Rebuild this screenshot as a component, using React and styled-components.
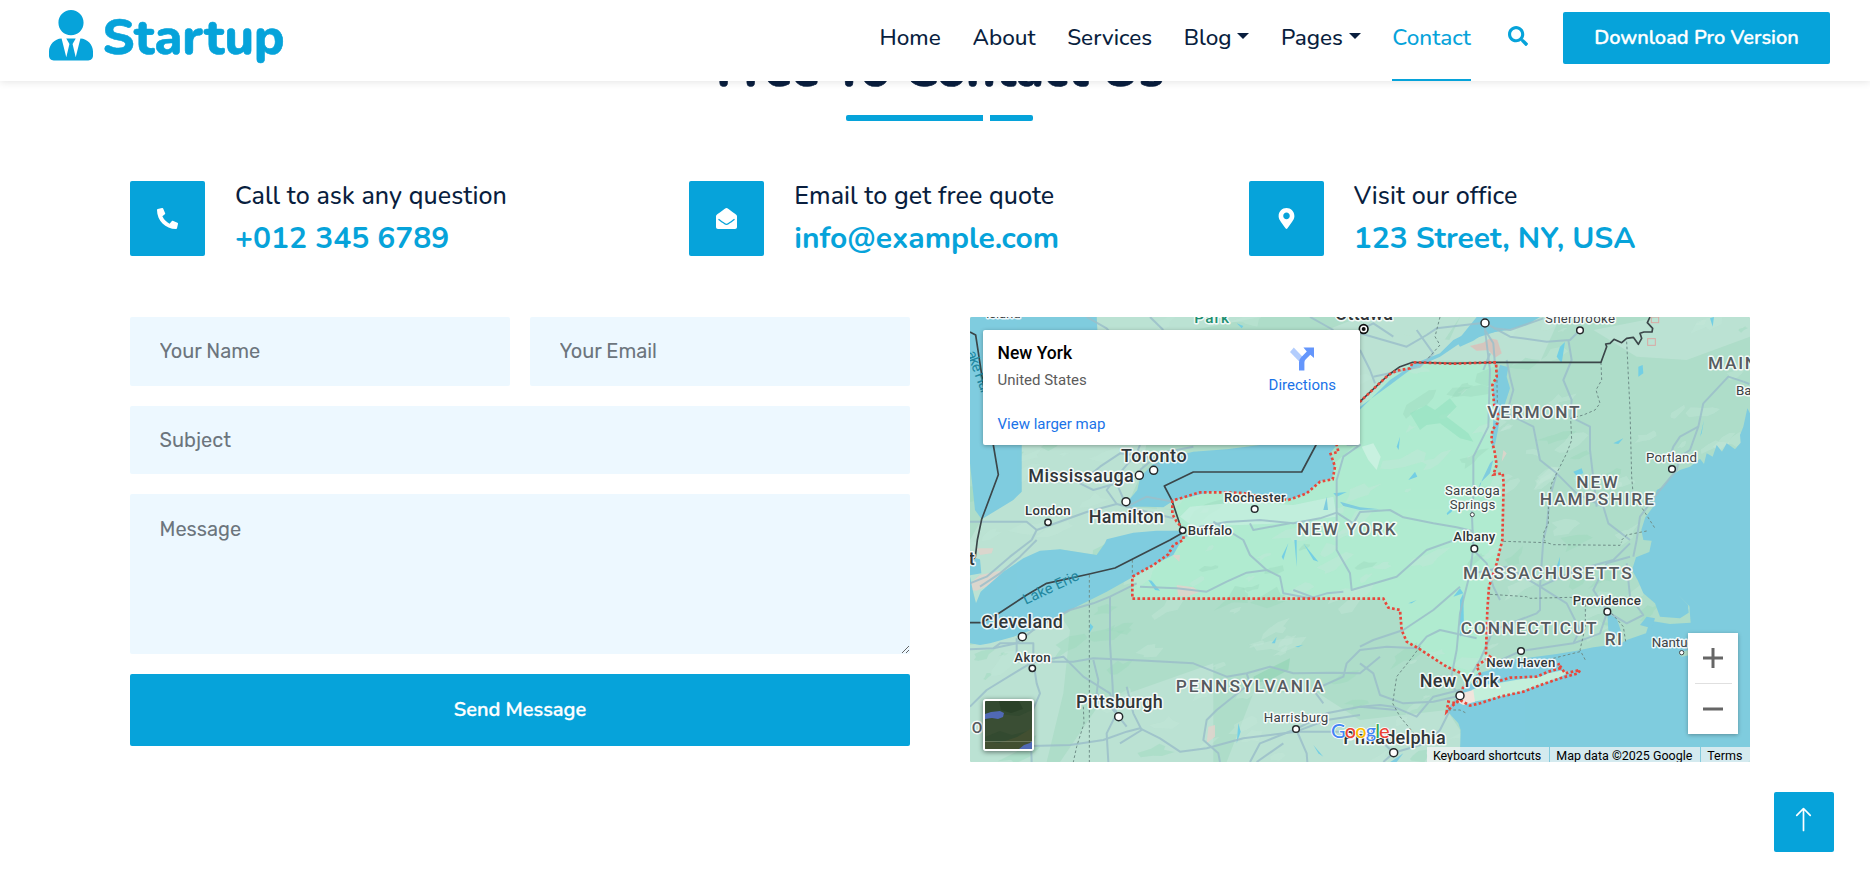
import React from "react";
import styled, { createGlobalStyle, css } from "styled-components";
import { FaUserTie, FaSearch, FaPhoneAlt, FaEnvelopeOpen, FaMapMarkerAlt } from "react-icons/fa";
import { BsArrowUp } from "react-icons/bs";

const primary = "#06A3DA";
const dark = "#091E3E";
const heading = `Nunito, Lato, "Noto Sans", sans-serif`;
const body = `Rubik, Roboto, sans-serif`;
const mapFont = `Roboto, "Liberation Sans", sans-serif`;

const Global = createGlobalStyle`
  * { box-sizing: border-box; }
  body { margin: 0; background: #fff; font-family: ${body}; overflow: hidden; }
  h1, h4, h5, p { margin: 0; }
`;

/* ---------- Page shell ---------- */
const Page = styled.div`
  position: relative;
  width: 100%;
  height: 888px;
  overflow: hidden;
`;

const Header = styled.header`
  position: relative;
  z-index: 2;
  display: flex;
  align-items: flex-start;
  justify-content: space-between;
  height: 81px;
  padding: 0 40px 0 48.5px;
  background: #fff;
  box-shadow: 0 1px 8px rgba(0, 0, 0, 0.11);
`;

const Brand = styled.a`
  display: flex;
  align-items: flex-start;
  padding-top: 10px;
  color: ${primary};
  font: 800 50px/60px ${heading};
  -webkit-text-stroke: 0.6px ${primary};
  svg { width: 44px; height: 50.5px; margin-right: 10px; }
`;

const BrandName = styled.span`
  margin-top: -2px;
`;

const Nav = styled.nav`
  display: flex;
  align-items: flex-start;
`;

const NavLink = styled.a`
  display: flex;
  align-items: flex-start;
  height: 81px;
  margin-right: 31.7px;
  padding-top: 21px;
  font: 500 22.5px/34px ${heading};
  white-space: nowrap;
  color: ${(p) => (p.$active ? primary : dark)};
  ${(p) => p.$active && css`box-shadow: inset 0 -2px 0 ${primary};`}
`;

const Caret = styled.i`
  margin: 12px 0 0 5.7px;
  border: 6.4px solid transparent;
  border-top-color: currentColor;
  border-bottom: 0;
`;

const SearchButton = styled.button`
  display: flex;
  margin: 26px 35.500px 0 5px;
  padding: 0;
  border: 0;
  background: none;
  color: ${primary};
  font-size: 20px;
`;

const Download = styled.a`
  display: flex;
  align-items: center;
  justify-content: center;
  width: 267px;
  height: 52px;
  margin-top: 12px;
  border-radius: 2px;
  background: ${primary};
  color: #fff;
  font: 600 20px/30px ${heading};
  -webkit-text-stroke: 0.3px #fff;
  white-space: nowrap;
`;

const Main = styled.main`
  width: 1620px;
  margin: -41px 0 0 130px;
`;

/* ---------- Section title ---------- */
const SectionTitle = styled.div`
  display: flex;
  flex-direction: column;
  align-items: center;
  h1 {
    color: ${dark};
    font: 800 50px/60px ${heading};
    -webkit-text-stroke: 0.6px ${dark};
    white-space: nowrap;
  }
`;

const Rule = styled.div`
  display: flex;
  gap: 7px;
  margin: 15px 1px 0 0;
`;

const RulePart = styled.span`
  width: ${(p) => p.$w}px;
  height: 6px;
  background: ${primary};
  border-radius: ${(p) => (p.$end ? "0 2px 2px 0" : "2px 0 0 2px")};
`;

/* ---------- Contact details ---------- */
const Details = styled.section`
  display: grid;
  grid-template-columns: repeat(3, 1fr);
  column-gap: 58px;
  margin-top: 60px;
`;

const Detail = styled.div`
  display: flex;
  gap: 30px;
`;

const IconTile = styled.div`
  display: flex;
  align-items: center;
  justify-content: center;
  flex: none;
  width: 75px;
  height: 75px;
  border-radius: 2px;
  background: ${primary};
  color: #fff;
  font-size: 21px;
`;

const DetailLabel = styled.h5`
  color: ${dark};
  font: 500 25px/30px ${heading};
  letter-spacing: 0.09px;
  white-space: nowrap;
`;

const DetailValue = styled.h4`
  margin-top: 10px;
  color: ${primary};
  font: 700 30px/36px ${heading};
  white-space: nowrap;
`;

/* ---------- Form ---------- */
const Columns = styled.section`
  display: grid;
  grid-template-columns: 1fr 1fr;
  gap: 60px;
  margin-top: 60px;
`;

const Form = styled.form`
  display: grid;
  grid-template-columns: 1fr 1fr;
  grid-template-rows: 68.5px 68.5px 160px 72px;
  gap: 20px;
  height: 429px;
`;

const field = css`
  width: 100%;
  height: 100%;
  border: 0;
  border-radius: 2px;
  background: #edf8ff;
  font: 400 20px/30px ${body};
  outline: none;
  &::placeholder { color: #6c757d; opacity: 1; }
`;

const Input = styled.input`
  ${field}
  grid-column: ${(p) => (p.$wide ? "1 / -1" : "auto")};
  padding: 0 29.5px;
`;

const Message = styled.textarea`
  ${field}
  grid-column: 1 / -1;
  padding: 20px 29.5px;
`;

const Submit = styled.button`
  grid-column: 1 / -1;
  border: 0;
  border-radius: 2px;
  background: ${primary};
  color: #fff;
  font: 600 20px/30px ${heading};
  -webkit-text-stroke: 0.3px #fff;
`;

/* ---------- Map ---------- */
const MapFrame = styled.div`
  position: relative;
  height: 445px;
  overflow: hidden;
  border-radius: 2px;
  background: #aeddc9;
  font-family: ${mapFont};
  > svg { display: block; }
`;

const PlaceCard = styled.div`
  position: absolute;
  left: 13px;
  top: 13px;
  display: flex;
  justify-content: space-between;
  width: 377px;
  height: 115px;
  padding: 12px 24px 0 14.5px;
  border-radius: 2px;
  background: #fff;
  box-shadow: 0 1px 4px rgba(0, 0, 0, 0.3);
`;

const PlaceName = styled.p`
  color: #000;
  font-size: 17.5px;
  font-weight: 500;
  line-height: 22px;
`;

const PlaceRegion = styled.p`
  margin-top: 6px;
  color: #5b5b5b;
  font-size: 15px;
  line-height: 20px;
`;

const MapLink = styled.a`
  display: block;
  color: #1a73e8;
  font-size: 15px;
  line-height: 20px;
`;

const LargerMap = styled(MapLink)`
  margin-top: 24px;
`;

const Directions = styled.div`
  display: flex;
  flex-direction: column;
  align-items: center;
  padding-top: 5px;
  svg { margin-bottom: 4px; }
`;

const Zoom = styled.div`
  position: absolute;
  left: 718px;
  top: 316px;
  display: flex;
  flex-direction: column;
  align-items: center;
  width: 50px;
  height: 101px;
  background: #fff;
  box-shadow: 0 1px 4px rgba(0, 0, 0, 0.3);
`;

const ZoomButton = styled.button`
  flex: 1;
  width: 37px;
  padding: 0;
  border: 0;
  background: none;
  & + & { border-top: 1px solid #e0e0e0; }
  svg { display: block; margin: 0 auto; }
`;

const Thumb = styled.div`
  position: absolute;
  left: 13px;
  top: 382px;
  width: 51px;
  height: 52px;
  border: 2px solid #fff;
  border-radius: 3px;
  overflow: hidden;
  box-shadow: 0 1px 5px rgba(0, 0, 0, 0.5);
  svg { display: block; }
`;

const Legal = styled.div`
  position: absolute;
  right: 0;
  bottom: 0;
  display: flex;
  height: 15px;
  background: rgba(245, 245, 245, 0.72);
  color: #000;
  font-size: 12.5px;
  line-height: 17px;
  white-space: nowrap;
`;

const LegalItem = styled.span`
  padding: 0 7.6px 0 6.3px;
  & + & { border-left: 1px solid #84cbdd; }
`;

const BackToTop = styled.a`
  position: absolute;
  left: 1774px;
  top: 792px;
  display: flex;
  justify-content: center;
  width: 60px;
  height: 60px;
  padding: 14px 1px 0 0;
  border-radius: 2px;
  background: ${primary};
  color: #fff;
  svg { width: 27px; height: 27px; }
`;

/* ---------- Map drawing ---------- */
const WATER = "#7fccdf";

const water = [
  "30,21 410,21 412,60 380,100 185,300 185,545 160,570 65,628 45,600 30,460",
  "500,590 510,566 532,540 541,500 580,462 640,440 700,425 800,418 900,405 960,380 1199,300 1290,210 1365,160 1440,130 1480,90 1540,60 1600,44 1640,30 1640,55 1560,80 1500,100 1440,140 1350,180 1290,225 1200,290 1150,380 1130,405 1110,430 1124,468 1115,505 1080,514 1040,550 985,570 900,552 760,544 640,572 610,592 560,590",
  "30,800 40,850 48,880 62,845 130,785 190,745 240,722 300,718 410,735 435,700 440,688 520,668 590,662 650,662 668,668 664,692 640,735 580,765 520,800 440,845 380,875 300,915 250,945 230,955 160,980 90,1000 60,1005 30,1000",
  "30,740 60,748 64,790 30,796",
  "1620,165 1645,172 1640,200 1650,235 1632,290 1612,330 1604,300 1598,250 1604,215",
  "1550,21 1740,21 1700,45 1640,60 1570,72 1540,92 1500,110 1490,95",
  "1600,330 1618,338 1606,400 1595,420",
  "1600,450 1590,490 1560,520 1550,560 1566,510 1590,460",
  "2370,310 2362,295 2350,350 2340,375 2342,398 2325,418 2300,400 2286,425 2270,405 2258,440 2240,430 2232,462 2220,446 2190,470 2160,480 2130,500 2110,530 2090,540 2080,590 2056,622 2044,660 2050,690 2075,692 2068,726 2028,742 2016,780 2034,812 2050,850 2085,880 2100,920 2160,925 2186,908 2184,885 2150,850 2188,888 2192,938 2130,942 2070,932 2058,970 2000,990 1980,1002 1900,1012 1850,1022 1790,1032 1700,1044 1620,1052 1590,1080 1550,1092 1535,1120 1500,1150 1460,1200 1475,1218 1495,1240 1502,1260 1500,1330 1480,1370 2380,1370",
  "1942,910 1970,925 1985,970 1965,980 1945,960",
  "2040,945 2060,920 2085,925 2075,955",
  "1270,1370 1330,1330 1310,1356",
  "1090,600 1100,560 1104,600",
  "1140,575 1200,592 1260,598 1200,600 1150,588",
];

const lakes = [
  "1345,510 1365,485 1372,500", "1480,860 1500,835 1510,850", "1840,485 1865,475 1870,490 1850,498",
  "2035,170 2048,165 2050,190 2035,200", "1800,110 1815,96 1805,160 1790,140", "2250,25 2262,21 2258,50",
  "2220,380 2232,330 2225,370", "965,740 985,700 970,750", "1003,690 1010,690 1010,770", "1030,700 1075,755 1060,750",
  "565,810 575,812 600,842 585,840", "1460,610 1480,590 1475,605 1462,615", "1310,410 1320,380 1316,420",
  "935,1000 950,980 945,1000", "1005,1010 1030,1004 1015,1012", "835,1240 842,1265 830,1300", "1060,1305 1090,1340 1075,1330",
  "390,940 400,950 388,970", "1500,870 1510,850 1512,960 1500,980", "1790,770 1800,740 1798,790", "830,40 850,48 845,55",
  "1120,550 1160,546 1130,560", "1345,880 1370,870 1355,880", "1960,400 1990,385 1975,402",
];

const roads = [
  "30,635 200,635 230,660 380,606 470,582 540,600 640,625",
  "230,660 215,690", "640,575 560,560 500,590 470,520 400,540 360,520 420,470 480,430 560,440 600,470",
  "470,582 440,540 470,500 530,430 540,405", "700,410 600,430 540,480", "660,690 720,650 800,636 900,630 1000,640 1080,625 1130,608",
  "1130,608 1130,510 1150,440 1200,405 1160,405", "1130,608 1180,640 1200,606 1290,600 1330,622 1420,640 1490,652 1540,664",
  "760,635 850,690 870,735 920,780 960,800 970,850 1050,865 1100,850 1150,845", "870,640 880,660 990,640",
  "540,830 650,835 740,845 800,815 860,788 920,780", "1130,608 1130,720 1170,790 1175,840 1310,800 1400,720 1540,670",
  "1000,840 1060,862", "1200,1010 1240,990 1330,960 1420,900 1500,830",
  "30,1018 100,1015 170,1000 220,960 330,900 400,880 450,860 530,820",
  "100,1015 120,1000 220,1000 220,1055 340,1055 400,1045 560,1052 700,1060 800,1100 860,1090 930,1070 1000,1090 1120,1088 1200,1090 1260,1040",
  "450,860 450,1000 458,1130 460,1200 500,1250", "220,1055 230,1120 240,1150 210,1220 215,1356",
  "30,1190 80,1140 170,1085 220,1055 310,1040 370,1100 450,1150 470,1210",
  "170,985 170,1050 220,1040", "400,1050 415,1110 410,1150 470,1210 440,1270 445,1356",
  "215,1308 330,1305 430,1290 500,1265 540,1255 600,1285 660,1325 740,1315 850,1285 1008,1265 1100,1230 1200,1215",
  "500,1130 520,1210 545,1260 480,1300", "860,1090 870,1120 770,1200 740,1230 730,1290 775,1330 780,1356",
  "1008,1257 1040,1330 1042,1356", "1008,1257 900,1300 870,1356", "1008,1257 1100,1210 1200,1190 1310,1200",
  "970,1300 890,1356", "1090,1180 1060,1140 1150,1100 1160,1060 1200,1020 1280,1010 1370,1015 1400,980 1440,960 1550,985",
  "1200,1060 1240,1090 1260,1155 1330,1180 1420,1175 1500,1157", "1200,1190 1260,1185 1300,1190 1370,1220 1420,1160 1500,1140",
  "1500,1157 1470,1120 1490,1020 1500,910 1530,790 1540,710 1535,600 1540,560", "1540,720 1580,760 1600,830 1620,870",
  "1540,560 1540,440 1585,350 1590,180 1575,60 1570,21", "1575,60 1600,100 1605,165", "1640,150 1650,200 1660,240 1640,310",
  "1640,310 1720,350 1740,450 1790,490 1850,550 1930,590 1945,640 2010,690", "1575,39 1650,80 1760,95 1830,90 1860,60",
  "1825,90 1835,150 1810,210 1835,270 1830,320 1890,350 1890,420 1910,590", "1790,490 1770,560 1760,650 1750,690 1745,760 1740,830",
  "1200,70 1270,90 1340,110 1400,75 1430,55 1560,40", "1200,120 1230,180 1245,220", "1370,60 1420,130 1380,170 1240,200",
  "1300,80 1240,40 1200,60", "1600,55 1650,60 1750,25", "1590,130 1570,180",
  "2350,215 2305,200 2230,280 2215,350 2190,420 2160,440 2150,480 2100,540 2040,620 2030,690 2020,740",
  "2215,350 2160,380 2140,410 2130,440", "2350,215 2368,222", "1540,790 1640,770 1740,830 1850,780 1960,750 2010,700",
  "1740,830 1740,900 1730,910 1600,960 1560,1050 1500,1150", "1740,830 1820,880 1860,960 1840,1000 1683,1023 1600,1060",
  "1942,905 1900,840 1940,760 2010,740", "1942,905 1920,970 1840,1000", "1942,905 2000,940 2050,915 2010,860 2000,760",
  "1500,1157 1470,1200 1440,1260 1400,1300 1301,1328", "1301,1328 1260,1290 1200,1265 1100,1265 1008,1265", "1301,1328 1270,1356",
  "380,21 440,55 470,90", "570,21 610,60", "1050,21 1120,60",
  "30,820 80,800 150,740 215,690", "60,830 120,790 180,740 230,690",
];

const dashed = [
  "388,795 388,1356", "517,750 517,800", "370,1190 372,1240 350,1310 340,1356",
  "1440,21 1425,80 1440,105 1400,150", "1923,157 1925,210 1908,240 1920,280 1905,300 1870,315 1832,325 1835,390 1820,430 1790,490 1775,520 1765,580 1765,640 1750,670 1755,694",
  "2000,95 2010,300 2015,500 2020,560 2050,600 2085,655", "1985,690 2000,675 2060,663", "1630,694 1760,698 1780,704 1980,706 1985,695",
  "1590,853 1700,860 1710,865 1830,862 1876,870 1876,950 1860,1020 1876,1050", "1860,1025 1760,1050 1700,1050",
  "1955,910 1990,950 1997,995", "1380,1010 1350,1050 1310,1100 1298,1180 1320,1220 1370,1280 1340,1300",
  "1465,1200 1500,1200 1520,1210", "1610,165 1612,280 1600,330",
];

const border = [
  "30,66 47,75 66,200 100,405 115,494 65,628 52,690 46,740 30,760",
  "30,938 64,938 118,909 200,855 260,820 388,792 465,774 630,690 668,668 636,572 613,528 700,486 1025,486 1068,405 1200,275 1285,195 1320,170 1358,157 1480,160 1610,157 1923,157 1940,110 1937,102 1950,100 1962,88 1985,98 2000,85 2020,82 2035,103 2045,85 2040,70 2052,66 2076,66 2078,55 2062,38 2070,21",
];

const stateLine =
  "1600,157 1608,157 1610,200 1597,225 1603,290 1615,315 1612,340 1597,360 1594,390 1603,420 1610,465 1600,494 1628,490 1631,520 1627,690 1610,760 1587,830 1582,900 1578,1030 1590,1040 1550,1068 1562,1098 1540,1120";
const southLine =
  "1500,1088 1460,1070 1375,1015 1340,995 1325,960 1320,900 1285,893 1270,866 517,866 517,800 580,765 625,733 640,705 670,690 672,660 650,635 637,612 637,572 720,547 790,547 850,549 900,560 985,570 1040,550 1080,515 1118,508 1125,470 1112,432 1135,425 1130,405 1200,275 1285,195 1310,182 1350,175 1358,157 1480,161 1608,157";
const islandLine =
  "1620,1112 1650,1103 1730,1100 1765,1085 1800,1075 1795,1060 1815,1090 1860,1080 1855,1090 1800,1105 1750,1122 1690,1145 1620,1160 1560,1180 1530,1187 1500,1170 1480,1185 1460,1205 1465,1175 1490,1180 1510,1130";

const nyShape =
  "1358,157 1608,157 1610,200 1597,225 1603,290 1615,315 1612,340 1597,360 1594,390 1603,420 1610,465 1600,494 1628,490 1631,520 1627,690 1610,760 1587,830 1582,900 1578,1030 1590,1040 1550,1068 1562,1098 1520,1130 1500,1088 1460,1070 1375,1015 1340,995 1325,960 1320,900 1285,893 1270,866 517,866 517,800 580,765 640,715 670,690 650,635 637,572 760,544 900,552 985,570 1040,550 1080,515 1118,508 1125,470 1112,432 1130,405 1200,290 1285,205";
const longIsland =
  "1540,1175 1535,1140 1570,1125 1620,1118 1680,1108 1740,1100 1765,1090 1800,1082 1830,1085 1800,1102 1740,1125 1680,1145 1600,1165";

/* Small terrain patches, spread by a fixed sequence so every render is the same. */
const patches = (() => {
  let s = 41;
  const r = () => ((s = (s * 16807) % 2147483647) / 2147483647);
  return Array.from({ length: 230 }, (_, i) => {
    const x = 30 + r() * 2340;
    const y = 21 + r() * 1335;
    const len = 10 + r() * 42;
    const tilt = -0.7 + r() * 0.5;
    const pts = Array.from({ length: 9 }, (_, k) => {
      const a = (k / 9) * Math.PI * 2;
      const q = len * (0.3 + r() * 0.9);
      const u = Math.cos(a) * q * 1.5;
      const v = Math.sin(a) * q * 0.55;
      return `${(x + u * Math.cos(tilt) - v * Math.sin(tilt)).toFixed(0)},${(y + u * Math.sin(tilt) + v * Math.cos(tilt)).toFixed(0)}`;
    }).join(" ");
    return { pts, fill: i % 4 === 0 ? "#9bdabd" : "#c3e8da" };
  });
})();

const lightLand = [
  "410,21 900,21 700,60 1100,60 1199,21 1500,21 1420,140 1290,210 1199,300 185,300 412,60",
  "185,400 560,400 540,500 500,590 640,600 660,660 440,690 410,735 300,718 130,785 48,880 30,800 30,690 65,628 185,545",
  "1200,60 1560,100 1480,150 1358,157 1285,195 1200,270", "1500,21 1800,21 1740,157 1608,157 1440,150",
  "30,1005 160,980 300,915 330,960 310,1150 260,1356 30,1356", "420,1180 760,1060 760,1356 300,1356",
  "880,1150 1060,1140 1200,1230 1260,1356 800,1356", "1200,1230 1460,1200 1500,1260 1500,1356 1200,1356",
  "1900,60 2100,21 2370,21 2370,80 2180,150 2030,140",
];

const urban = [
  "1530,108 1570,98 1590,85 1612,90 1625,130 1605,143 1585,120 1550,122", "30,820 60,795 120,782 130,795 90,825 50,842 30,840",
  "650,825 700,832 720,845 680,860 655,858", "745,1250 765,1245 765,1280 740,1300", "1505,1150 1540,1145 1545,1175 1510,1185 1490,1175",
  "560,480 600,465 590,490", "1630,420 1640,430 1625,455", "50,715 100,715 95,730 60,735", "635,735 660,735 658,755 650,748",
];

const cities = [
  [581, 481], [538, 496], [498, 575], [264, 637, 9.5], [884, 597, 10], [668, 661, 9.5], [187, 980], [217, 1075, 9.5], [476, 1220],
  [1008, 1257, 10], [1301, 1328], [1500, 1157], [1683, 1023, 10], [1942, 905, 10], [2165, 1028, 6.5], [1543, 716, 10], [1537, 614, 6],
  [2136, 477, 10], [1860, 61, 10], [1575, 39],
];

/* text, x, baseline, width, size, kind */
const labels = [
  ["Toronto", 483, 456, 197, 54, "city"], ["Mississauga", 205, 516, 316, 54, "city"], ["Hamilton", 386, 640, 225, 54, "city"],
  ["London", 195, 616, 137, 40, "city"], ["Rochester", 792, 577, 185, 40, "city"], ["Buffalo", 683, 676, 133, 40, "city"],
  ["Cleveland", 64, 954, 245, 54, "city"], ["Akron", 163, 1055, 109, 40, "city"], ["Pittsburgh", 348, 1194, 260, 54, "city"],
  ["Harrisburg", 911, 1237, 194, 40, "town"], ["Philadelphia", 1150, 1302, 307, 54, "city"], ["New York", 1379, 1132, 238, 54, "city"],
  ["New Haven", 1579, 1072, 207, 40, "city"], ["Providence", 1838, 884, 205, 40, "city"], ["Nantucket", 2075, 1011, 0, 40, "town"],
  ["Albany", 1480, 694, 126, 40, "city"], ["Saratoga", 1455, 556, 164, 40, "town"], ["Springs", 1469, 597, 137, 40, "town"],
  ["Portland", 2058, 457, 153, 40, "town"], ["Bangor", 2328, 255, 0, 40, "town"], ["Sherbrooke", 1755, 40, 210, 40, "town"],
  ["Ottawa", 1125, 31, 174, 54, "city"], ["Island", 78, 23, 104, 40, "town"],
  ["NEW YORK", 1011, 675, 296, 52, "state"], ["VERMONT", 1582, 324, 277, 52, "state"], ["NEW", 1849, 534, 124, 52, "state"],
  ["HAMPSHIRE", 1739, 586, 343, 52, "state"], ["MASSACHUSETTS", 1509, 808, 506, 52, "state"],
  ["CONNECTICUT", 1502, 973, 408, 52, "state"], ["RI", 1934, 1006, 52, 52, "state"], ["PENNSYLVANIA", 647, 1146, 444, 52, "state"],
  ["MAINE", 2244, 177, 0, 52, "state"], ["OHIO", 35, 1268, 0, 46, "state"], ["t", 26, 766, 0, 54, "city"],
];

const kinds = {
  city: { fill: "#313639", fontWeight: 500 },
  town: { fill: "#3c4245", fontWeight: 400 },
  state: { fill: "#565b60", fontWeight: 500 },
};

function Terrain() {
  return (
    <svg width="780" height="445" viewBox="30 21 2340 1335" preserveAspectRatio="none" fontFamily={mapFont}>
      <rect x="30" y="21" width="2340" height="1335" fill="#aeddc9" />
      {lightLand.map((p) => <polygon key={p} points={p} fill="#bbe2d3" />)}
      <polygon points={nyShape} fill="#b0ebd0" />
      {patches.map((p) => <polygon key={p.pts} points={p.pts} fill={p.fill} opacity="0.42" />)}
      {urban.map((p) => <polygon key={p} points={p} fill="#e0d3cb" opacity="0.85" />)}
      <polygon points="1530,108 1570,98 1590,85 1612,90 1625,130 1605,143 1585,120 1550,122" fill="#d3bdb8" opacity="0.7" />
      <polygon points="690,590 850,575 1000,585 1120,560 1130,620 960,640 700,650 660,620" fill="#c5efde" opacity="0.8" />
      <polygon points="1350,310 1400,285 1425,300 1470,265 1490,290 1460,320 1525,370 1540,395 1500,385 1440,340 1400,345 1380,360" fill="#97e2c2" opacity="0.7" />
      <polygon points="1205,410 1240,400 1262,440 1250,480 1225,450" fill="#c8f1e0" />
      <polygon points="880,1100 990,1045 985,1080 930,1110 890,1118" fill="#96d6b8" opacity="0.8" />
      {water.map((p) => <polygon key={p} points={p} fill={WATER} />)}
      <polygon points={longIsland} fill="#c3efdb" />
      <polygon points="1505,1150 1540,1140 1545,1175 1510,1185 1490,1175" fill="#f1e4dc" />
      <polygon points="2155,1030 2185,1020 2190,1035 2165,1040" fill="#aeddc9" />
      {lakes.map((p) => <polygon key={p} points={p} fill="#74cfe4" />)}
      <g fill="none" stroke="#9cbfca" strokeWidth="6" strokeLinejoin="round" opacity="0.85">
        {roads.map((p) => <polyline key={p} points={p} />)}
      </g>
      <g fill="none" stroke="#6f8d88" strokeWidth="3" strokeDasharray="8 7">
        {dashed.map((p) => <polyline key={p} points={p} />)}
      </g>
      <g fill="none" stroke="#3b4649" strokeWidth="5" strokeLinejoin="round">
        {border.map((p) => <polyline key={p} points={p} />)}
      </g>
      <g fill="none" stroke="#e8473b" strokeWidth="8" strokeDasharray="8 7">
        {[stateLine, southLine, islandLine].map((p) => <polyline key={p} points={p} />)}
      </g>
      <g fill="none" stroke="#d9a9a4" strokeWidth="3">
        <rect x="2074" y="21" width="22" height="17" />
        <rect x="2063" y="86" width="23" height="20" />
      </g>
      <g fill="#2187a0" fontSize="44">
        <text transform="translate(197 884) rotate(-25)" textLength="180">Lake Erie</text>
        <text transform="translate(20 128) rotate(70)" textLength="135">ake Hur</text>
      </g>
      {cities.map(([x, y, r = 12]) => (
        <circle key={`${x}-${y}`} cx={x} cy={y} r={r} fill="#fff" stroke="#24292b" strokeWidth={r < 8 ? 2.5 : 4.5} />
      ))}
      <circle cx="1211" cy="57" r="13" fill="#fff" stroke="#111" strokeWidth="5" />
      <circle cx="1211" cy="57" r="6" fill="#111" />
      <g stroke="#fff" strokeWidth="9" strokeLinejoin="round" paintOrder="stroke">
        {labels.map(([t, x, y, w, size, kind]) => (
          <text
            key={t + x}
            x={x}
            y={y}
            fontSize={size}
            textLength={w || undefined}
            letterSpacing={w ? undefined : kind === "state" ? 5 : 0}
            strokeOpacity="0.85"
            {...kinds[kind]}
          >
            {t}
          </text>
        ))}
        <text x="703" y="38" fontSize="46" fontWeight="500" fill="#1f8f70" textLength="104" strokeOpacity="0.8">Park</text>
      </g>
      <text x="1113" y="1283" fontSize="60" fontWeight="500" fontFamily="Lato, Inter, sans-serif" textLength="176" stroke="#fff" strokeWidth="5" paintOrder="stroke">
        <tspan fill="#4285f4">G</tspan>
        <tspan fill="#ea4335">o</tspan>
        <tspan fill="#fbbc04">o</tspan>
        <tspan fill="#4285f4">g</tspan>
        <tspan fill="#34a853">l</tspan>
        <tspan fill="#ea4335">e</tspan>
      </text>
    </svg>
  );
}

function DirectionsIcon() {
  return (
    <svg width="24" height="24" viewBox="0 0 24 24">
      <path d="M0 5l3.8-4.6 8.7 9.3-3.3 4.8z" fill="#b3cdfd" />
      <path d="M9 23.6v-8.2q0-3 2.2-5.2L16.8 4.6 13.4 0.6H24V10.9L20.3 7.7 15.6 12.5Q14.4 13.7 14.4 15.6V23.6z" fill="#6496fc" />
    </svg>
  );
}

function SatelliteView() {
  return (
    <svg width="47" height="48" viewBox="0 0 47 48">
      <rect width="47" height="48" fill="#334a30" />
      <path d="M0 20l14-7 20 2 13-6v20l-20 5-12-4-15 6z" fill="#3a4e34" />
      <path d="M0 48V40l14 2 18-6 15-9v15l-9 6z" fill="#424f31" />
      <path d="M14 0h20l4 8-12 4-10-3z" fill="#2a4128" />
      <path d="M0 13l6-2 9-1 4 2-1 4-5 2-6-1-7 1z" fill="#5069b4" />
      <path d="M34 48l5-4 6-2 2-2v8z" fill="#5069b4" />
      <path d="M0 40.500h47" stroke="#8a947a" strokeWidth=".6" />
    </svg>
  );
}

/* ---------- Content ---------- */
const links = [
  { text: "Home" }, { text: "About" }, { text: "Services" }, { text: "Blog", menu: true },
  { text: "Pages", menu: true }, { text: "Contact", active: true },
];

const details = [
  { icon: <FaPhoneAlt />, label: "Call to ask any question", value: "+012 345 6789" },
  { icon: <FaEnvelopeOpen />, label: "Email to get free quote", value: "info@example.com" },
  { icon: <FaMapMarkerAlt />, label: "Visit our office", value: "123 Street, NY, USA" },
];

export default function App() {
  return (
    <Page>
      <Global />
      <Header>
        <Brand>
          <FaUserTie />
          <BrandName>Startup</BrandName>
        </Brand>
        <Nav>
          {links.map((l) => (
            <NavLink key={l.text} $active={l.active}>
              {l.text}
              {l.menu && <Caret />}
            </NavLink>
          ))}
          <SearchButton aria-label="Search"><FaSearch /></SearchButton>
          <Download>Download Pro Version</Download>
        </Nav>
      </Header>

      <Main>
        <SectionTitle>
          <h1>Free To Contact Us</h1>
          <Rule>
            <RulePart $w={137} />
            <RulePart $w={43} $end />
          </Rule>
        </SectionTitle>

        <Details>
          {details.map((d) => (
            <Detail key={d.label}>
              <IconTile>{d.icon}</IconTile>
              <div>
                <DetailLabel>{d.label}</DetailLabel>
                <DetailValue>{d.value}</DetailValue>
              </div>
            </Detail>
          ))}
        </Details>

        <Columns>
          <Form>
            <Input placeholder="Your Name" />
            <Input placeholder="Your Email" />
            <Input $wide placeholder="Subject" />
            <Message placeholder="Message" />
            <Submit type="button">Send Message</Submit>
          </Form>

          <MapFrame>
            <Terrain />
            <PlaceCard>
              <div>
                <PlaceName>New York</PlaceName>
                <PlaceRegion>United States</PlaceRegion>
                <LargerMap>View larger map</LargerMap>
              </div>
              <Directions>
                <DirectionsIcon />
                <MapLink>Directions</MapLink>
              </Directions>
            </PlaceCard>
            <Thumb><SatelliteView /></Thumb>
            <Zoom>
              <ZoomButton aria-label="Zoom in">
                <svg width="20" height="20" viewBox="0 0 20 20"><path d="M0 10h20M10 0v20" stroke="#666" strokeWidth="3" /></svg>
              </ZoomButton>
              <ZoomButton aria-label="Zoom out">
                <svg width="20" height="20" viewBox="0 0 20 20"><path d="M0 10h20" stroke="#666" strokeWidth="3" /></svg>
              </ZoomButton>
            </Zoom>
            <Legal>
              <LegalItem>Keyboard shortcuts</LegalItem>
              <LegalItem>Map data ©2025 Google</LegalItem>
              <LegalItem>Terms</LegalItem>
            </Legal>
          </MapFrame>
        </Columns>
      </Main>

      <BackToTop aria-label="Back to top"><BsArrowUp /></BackToTop>
    </Page>
  );
}
